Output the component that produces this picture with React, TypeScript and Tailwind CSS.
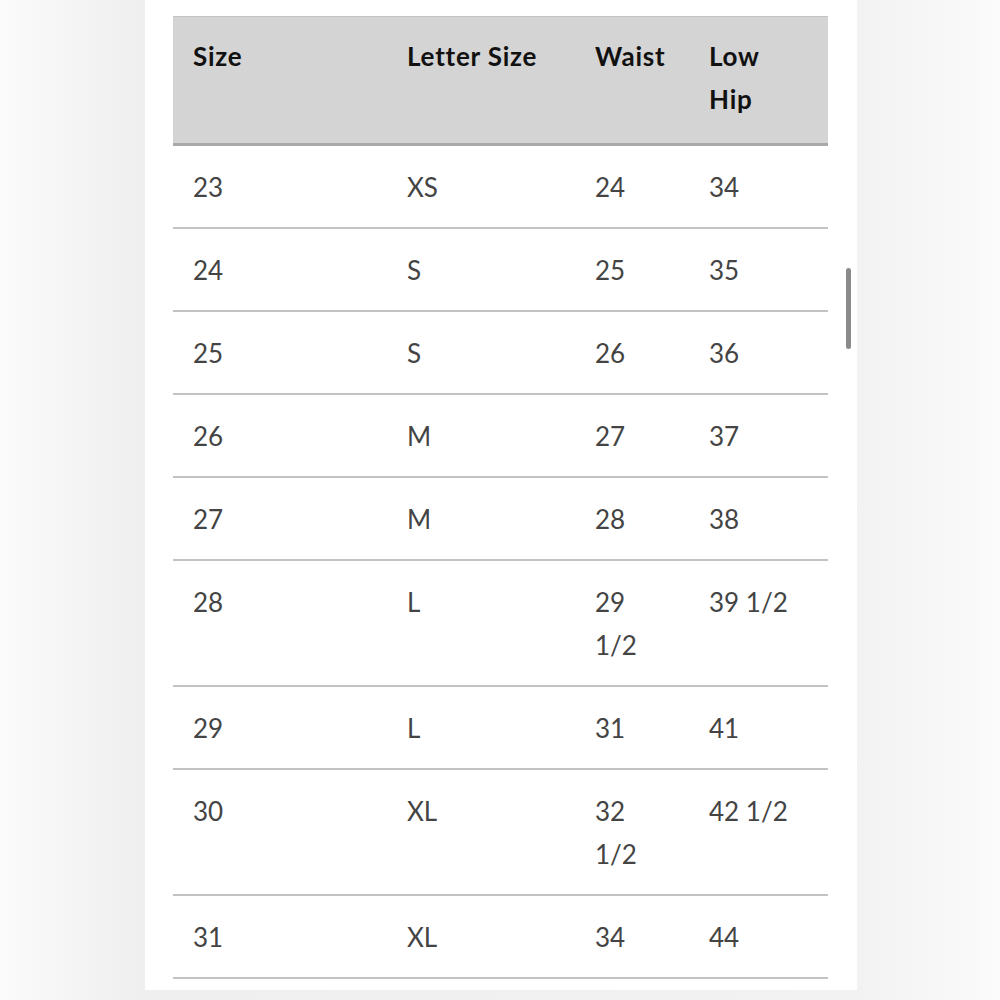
const rows: [string, string, string, string][] = [
  ["23", "XS", "24", "34"],
  ["24", "S", "25", "35"],
  ["25", "S", "26", "36"],
  ["26", "M", "27", "37"],
  ["27", "M", "28", "38"],
  ["28", "L", "29 1/2", "39 1/2"],
  ["29", "L", "31", "41"],
  ["30", "XL", "32 1/2", "42 1/2"],
  ["31", "XL", "34", "44"],
]

export default function App() {
  return (
    <div className="w-[1000px] h-[1000px] flex bg-[linear-gradient(to_right,#fbfbfb,#efefef_14%,#f2f2f2_86%,#fbfbfb)] font-['Lato',sans-serif]">
      <div className="relative ml-[145px] w-[712px] h-[990px] bg-white pl-[28px] pt-[16px]">
        <table className="table-fixed w-[655px] border-collapse text-[26px] leading-[43px]">
          <colgroup>
            <col className="w-[214px]" />
            <col className="w-[188px]" />
            <col className="w-[114px]" />
            <col className="w-[139px]" />
          </colgroup>
          <thead>
            <tr className="bg-[#d4d4d4] border-t border-[#c4c4c4] border-b-[3px] border-b-[#a9a9a9]">
              <th className="align-top text-left font-bold tracking-[0.03em] text-[#111] pl-5 pr-4 pt-[18px] pb-[22px]">Size</th>
              <th className="align-top text-left font-bold tracking-[0.03em] text-[#111] pl-5 pr-4 pt-[18px] pb-[22px]">Letter Size</th>
              <th className="align-top text-left font-bold tracking-[0.03em] text-[#111] pl-5 pr-1 pt-[18px] pb-[22px]">Waist</th>
              <th className="align-top text-left font-bold tracking-[0.03em] text-[#111] pl-5 pr-8 pt-[18px] pb-[22px]">Low Hip</th>
            </tr>
          </thead>
          <tbody>
            {rows.map((r, i) => (
              <tr key={i} className="border-b-2 border-[#c3c3c3]">
                {r.map((c, j) => (
                  <td
                    key={j}
                    className={`align-top text-[#444] pl-5 pt-[20px] pb-[18px] ${j === 2 ? "pr-5" : "pr-4"}`}
                  >
                    {c}
                  </td>
                ))}
              </tr>
            ))}
          </tbody>
        </table>
        <div className="absolute left-[701px] top-[268px] w-[5px] h-[81px] rounded-full bg-[#8a8a8a]" />
      </div>
    </div>
  )
}
